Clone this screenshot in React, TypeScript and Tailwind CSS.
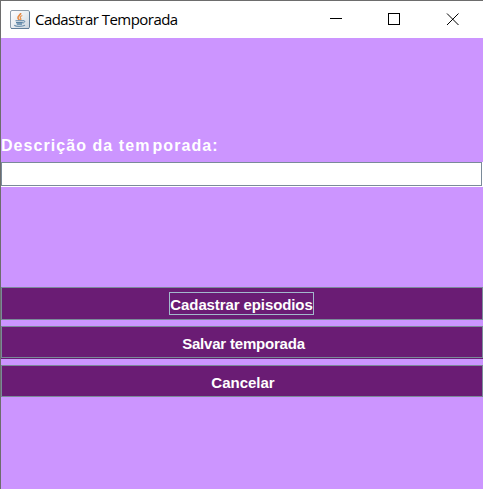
import React from "react";

function JavaIcon() {
  return (
    <svg width="20" height="20" viewBox="0 0 20 20" className="shrink-0">
      <defs>
        <linearGradient id="tile" x1="0" y1="0" x2="1" y2="1">
          <stop offset="0" stopColor="#ffffff" />
          <stop offset="0.5" stopColor="#e9edf1" />
          <stop offset="1" stopColor="#c9d3dc" />
        </linearGradient>
      </defs>
      <rect x="0.5" y="0.5" width="19" height="18" rx="1.5" fill="url(#tile)" stroke="#8d9dac" />
      <path d="M1 18.5H19M19.5 2V17" stroke="#607d98" fill="none" />
      <path d="M10.7 3C11 5 7.2 6 8 8.2C8.3 9 9 9.6 9.2 10.2" stroke="#e58a45" strokeWidth="1.6" fill="none" />
      <path d="M12.3 5.5C10 6.5 9.8 7.5 10.8 8.7C11.1 9.3 10.7 9.8 10.4 10.2" stroke="#e8924f" strokeWidth="1.3" fill="none" />
      <path d="M5.5 10.7H13M6 12.6H12.8M6.8 14.1H12" stroke="#5b84a5" strokeWidth="1.1" fill="none" />
      <path d="M13 10.7C15.5 10.2 15.2 12.6 12.8 13.1" stroke="#5b84a5" fill="none" />
      <path d="M4.2 15.3C6 16.7 12.5 16.7 15 15.3" stroke="#6d91ae" strokeWidth="1.2" fill="none" />
    </svg>
  );
}

function ActionButton({ label, className, textClass, focused = false }: { label: string; className: string; textClass: string; focused?: boolean }) {
  return (
    <button
      className={`flex w-full shrink-0 items-center justify-center border border-[#7a8a99] bg-[#6a1c74] text-[15px] font-bold leading-[21px] text-white ${className}`}
    >
      <span className={`flex h-[23px] items-center justify-center whitespace-nowrap border pt-[2px] ${focused ? "w-[145px] border-[#a3b8cc]" : "border-transparent"} ${textClass}`}>
        {label}
      </span>
    </button>
  );
}

export default function App() {
  return (
    <div className="flex h-[491px] w-[484px] flex-col items-start bg-white font-['Liberation_Sans',Arial,sans-serif]">
      <div className="flex h-[489px] w-[483px] flex-col border-l border-t border-[#6d6d6d] bg-[#cc95ff]">
        <header className="flex h-[37px] shrink-0 items-center bg-white pl-[9px]">
          <JavaIcon />
          <h1 className="ml-[5px] w-[144px] whitespace-nowrap pb-[2px] font-['Open_Sans','Noto_Sans',sans-serif] text-[15px] leading-5 tracking-[-0.55px] text-black">
            Cadastrar Temporada
          </h1>
          <svg width="130" height="13" viewBox="0 0 130 13" className="ml-[151px] shrink-0" fill="none" stroke="#000">
            <path d="M0 5.5H12M58.5 0.5H69.5V11.5H58.5Z" shapeRendering="crispEdges" />
            <path d="M117 0.5L128.5 12M128.5 0.5L117 12" />
          </svg>
        </header>
        <main className="flex flex-col pt-[97px]">
          <label htmlFor="descricao" className="h-[27px] whitespace-nowrap text-base font-bold leading-[21px] tracking-[1.06px] text-white">
            Descrição da tem<span className="ml-[2px]">porada:</span>
          </label>
          <div className="h-[25px] border-b border-r border-white">
            <input id="descricao" className="block h-6 w-full border border-[#7a8a99] bg-white px-1 text-base outline-none" />
          </div>
          <ActionButton label="Cadastrar episodios" className="mt-[100px] h-[33px] pr-[2px]" textClass="pl-px tracking-[-0.1px]" focused />
          <div className="mt-1.5 border-b border-[#6a1c74]">
            <ActionButton label="Salvar temporada" className="h-8" textClass="pl-[3px] tracking-[-0.2px]" />
          </div>
          <ActionButton label="Cancelar" className="mt-1.5 h-8" textClass="pl-[2px]" />
        </main>
      </div>
    </div>
  );
}
